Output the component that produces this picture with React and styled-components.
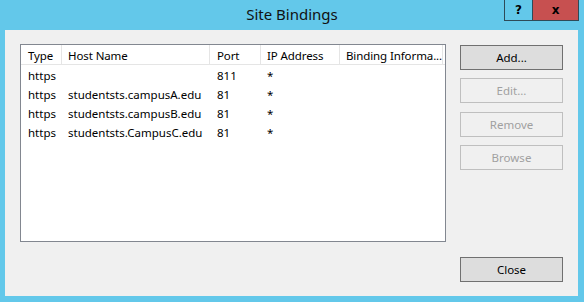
import React from 'react'
import styled, { createGlobalStyle } from 'styled-components'

const GlobalStyle = createGlobalStyle`
  html, body { margin: 0; padding: 0; }
  body {
    background: #63c8ea;
    font-family: "Noto Sans", "Open Sans", sans-serif;
    font-size: 11.5px;
    color: #000;
  }
`

const Window = styled.div`
  width: 584px;
  height: 302px;
  box-sizing: border-box;
  background: #63c8ea;
  padding: 0 6px 6px 5px;
  display: flex;
  flex-direction: column;
`

const TitleBar = styled.div`
  height: 30px;
  margin: 0 -6px 0 -5px;
  display: grid;
  grid-template-columns: 1fr auto 1fr;
`

const Title = styled.div`
  grid-column: 2;
  font-size: 15px;
  line-height: 29px;
  color: #111;
`

const Controls = styled.div`
  grid-column: 3;
  justify-self: end;
  align-self: start;
  display: flex;
  margin-right: 5px;
`

const CtlButton = styled.div`
  box-sizing: border-box;
  height: 21px;
  width: ${p => p.$w}px;
  background: ${p => p.$bg};
  border: 1px solid #2e4a58;
  border-top: none;
  ${p => p.$joined && 'border-left: none;'}
  display: flex;
  align-items: center;
  justify-content: center;
  font-family: "DejaVu Sans", sans-serif;
  font-weight: bold;
  font-size: 12px;
  color: #000;
`

const Client = styled.div`
  flex: 1;
  background: #f0f0f0;
  display: flex;
  gap: 14px;
  padding: 14px 15px 14px 15px;
`

const List = styled.div`
  box-sizing: border-box;
  width: 426px;
  height: 198px;
  background: #fff;
  border: 1px solid #828790;
  overflow: hidden;
`

const Row = styled.div`
  display: grid;
  grid-template-columns: 41px 148px 51px 79px 103px;
  height: ${p => (p.$head ? 20 : 19)}px;
  ${p => p.$head && 'border-bottom: 1px solid #e5e5e5; box-sizing: border-box;'}
`

const Cell = styled.div`
  padding-left: ${p => p.$pad || 7}px;
  padding-top: 1px;
  line-height: 19px;
  white-space: nowrap;
  letter-spacing: ${p => (p.$head ? '-0.1px' : 'normal')};
  ${p => p.$head && 'border-right: 1px solid #e5e5e5;'}
`

const Side = styled.div`
  display: flex;
  flex-direction: column;
  padding-top: 1px;
`

const Button = styled.div`
  box-sizing: border-box;
  width: 103px;
  height: 25px;
  margin-bottom: ${p => p.$mb || 0}px;
  border: 1px solid ${p => (p.$disabled ? '#bfbfbf' : '#707070')};
  background: ${p => (p.$disabled ? '#f0f0f0' : '#dddddd')};
  color: ${p => (p.$disabled ? '#a0a0a0' : '#000')};
  display: flex;
  align-items: center;
  justify-content: center;
  ${p => p.$bottom && 'margin-top: auto;'}
`

const headers = ['Type', 'Host Name', 'Port', 'IP Address', 'Binding Informa...']
const bindings = [
  ['https', '', '811', '*', ''],
  ['https', 'studentsts.campusA.edu', '81', '*', ''],
  ['https', 'studentsts.campusB.edu', '81', '*', ''],
  ['https', 'studentsts.CampusC.edu', '81', '*', ''],
]
const pads = [7, 6, 7, 6, 6]

const App = () => {
  return (
    <>
      <GlobalStyle />
      <Window>
        <TitleBar>
          <Title>Site Bindings</Title>
          <Controls>
            <CtlButton $w={29} $bg="#63c8ea">?</CtlButton>
            <CtlButton $w={46} $bg="#c75050" $joined>x</CtlButton>
          </Controls>
        </TitleBar>
        <Client>
          <List>
            <Row $head>
              {headers.map((h, i) => (
                <Cell key={h} $head $pad={pads[i]}>{h}</Cell>
              ))}
            </Row>
            {bindings.map((b, r) => (
              <Row key={r}>
                {b.map((v, i) => (
                  <Cell key={i} $pad={pads[i]}>{v}</Cell>
                ))}
              </Row>
            ))}
          </List>
          <Side>
            <Button $mb={8}>Add...</Button>
            <Button $mb={9} $disabled>Edit...</Button>
            <Button $mb={8} $disabled>Remove</Button>
            <Button $disabled>Browse</Button>
            <Button $bottom>Close</Button>
          </Side>
        </Client>
      </Window>
    </>
  )
}

export default App
